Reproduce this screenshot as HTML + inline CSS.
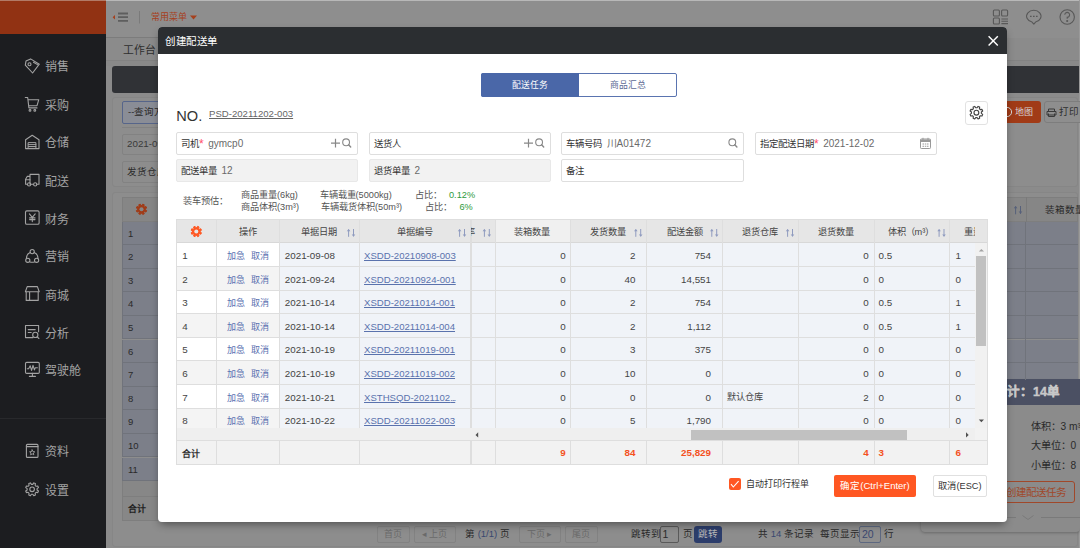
<!DOCTYPE html><html lang="zh-CN"><head><meta charset="utf-8"><style>
*{box-sizing:border-box;margin:0;padding:0}
html,body{width:1080px;height:548px;overflow:hidden;background:#8b8b8b;font-family:"Liberation Sans",sans-serif;color:#333}
div,span{position:absolute;white-space:nowrap}
svg{position:absolute;left:0;top:0;overflow:visible}
.mi{left:45px;color:#a3a3a3;font-size:12px;line-height:16px}
.inp{height:23px;border:1px solid #dedede;border-radius:2px;background:#fff;font-size:9.4px;line-height:22px;color:#333;padding-left:4px}
.inp.g{background:#f2f2f2;border-color:#e8e8e8}
.v{position:static;color:#6a6a6a;margin-left:4.5px;font-size:10px}
.req{position:static;color:#ff4d6a;font-size:12px;vertical-align:-1px}
.c{font-size:9.8px;line-height:23px;color:#444}
.hd{font-size:9.2px;line-height:26px;color:#444}
.bt{font-size:9.5px;line-height:14px;color:#2a2a2a}
</style></head><body>
<div style="left:0;top:0;width:106px;height:548px;background:#1c1d20"></div>
<div style="left:0;top:0;width:106px;height:34px;background:#913213;border-top:1px solid #b27a66"></div>
<div class="mi" style="top:59.1px">销售</div>
<div class="mi" style="top:98.3px">采购</div>
<div class="mi" style="top:135.2px">仓储</div>
<div class="mi" style="top:173.5px">配送</div>
<div class="mi" style="top:211.8px">财务</div>
<div class="mi" style="top:249.3px">营销</div>
<div class="mi" style="top:287.8px">商城</div>
<div class="mi" style="top:325.5px">分析</div>
<div class="mi" style="top:363.1px">驾驶舱</div>
<div class="mi" style="top:444.3px">资料</div>
<div class="mi" style="top:483.0px">设置</div>
<div style="left:0;top:418px;width:106px;height:1px;background:#28292c"></div>
<div style="left:106px;top:0;width:974px;height:38px;background:#8e8e8e;border-top:1px solid #b8b8b8"></div>
<div style="left:106px;top:37px;width:300px;height:1px;background:#7c7c7c"></div>
<div style="left:151px;top:11px;font-size:9px;line-height:12px;color:#a6401d">常用菜单</div>
<div style="left:122.5px;top:42.5px;font-size:10.8px;line-height:14px;color:#2e2e2e">工作台</div>
<div style="left:106px;top:60px;width:974px;height:6px;background:#898989;border-top:1px solid #828282"></div>
<div style="left:1078.5px;top:0;width:1.5px;height:548px;background:#9a9a9a"></div>
<div style="left:112px;top:66px;width:966.5px;height:27px;background:#303236;border-radius:3px 0 0 3px"></div>
<div style="left:112px;top:97px;width:966px;height:90px;background:#8d8d8d;border-radius:3px;border:1px solid #868686"></div>
<div style="left:122px;top:101px;width:60px;height:23px;border:1px solid #56658a;border-radius:2px;background:#8a8d96"></div>
<div class="bt" style="left:128px;top:104.5px">--查询方式</div>
<div style="left:122px;top:127px;width:60px;height:1px;background:#828282"></div>
<div style="left:122px;top:133.5px;width:60px;height:21.5px;border:1px solid #828282;border-radius:2px;background:#8d8d8d"></div>
<div class="bt" style="left:127px;top:137px;color:#3a3a3a;font-size:9.8px">2021-09-01</div>
<div style="left:122px;top:160.5px;width:60px;height:22px;border:1px solid #828282;border-radius:2px;background:#8d8d8d"></div>
<div class="bt" style="left:127px;top:164.5px">发货仓库</div>
<div style="left:990px;top:101px;width:50.5px;height:22px;background:#a13b17;border-radius:3px"></div>
<div style="left:1014.5px;top:105.5px;font-size:9px;line-height:12px;color:#d6d6d6">地图</div>
<div style="left:1043.5px;top:101px;width:50px;height:22px;border:1px solid #7d7d7d;border-radius:3px;background:#8e8e8e"></div>
<div style="left:1059.3px;top:105.5px;font-size:9.5px;line-height:12px;color:#2e2e2e">打印</div>
<div style="left:112px;top:192px;width:966px;height:354.5px;background:#8d8d8d;border-radius:3px;border:1px solid #868686"></div>
<div style="left:122px;top:197px;width:956px;height:24.5px;background:#868686;border:1px solid #7e7e7e"></div>
<div style="left:122px;top:221.5px;width:956px;height:23.6px;background:#7c7f89;border-left:1px solid #70737b;border-bottom:1px solid #70737b"></div>
<div class="bt" style="left:128px;top:226.5px">1</div>
<div style="left:122px;top:245.1px;width:956px;height:23.6px;background:#7c7f89;border-left:1px solid #70737b;border-bottom:1px solid #70737b"></div>
<div class="bt" style="left:128px;top:250.1px">2</div>
<div style="left:122px;top:268.7px;width:956px;height:23.6px;background:#7c7f89;border-left:1px solid #70737b;border-bottom:1px solid #70737b"></div>
<div class="bt" style="left:128px;top:273.7px">3</div>
<div style="left:122px;top:292.3px;width:956px;height:23.6px;background:#7c7f89;border-left:1px solid #70737b;border-bottom:1px solid #70737b"></div>
<div class="bt" style="left:128px;top:297.3px">4</div>
<div style="left:122px;top:315.9px;width:956px;height:23.6px;background:#7c7f89;border-left:1px solid #70737b;border-bottom:1px solid #70737b"></div>
<div class="bt" style="left:128px;top:320.9px">5</div>
<div style="left:122px;top:339.5px;width:956px;height:23.6px;background:#7c7f89;border-left:1px solid #70737b;border-bottom:1px solid #70737b"></div>
<div class="bt" style="left:128px;top:344.5px">6</div>
<div style="left:122px;top:363.1px;width:956px;height:23.6px;background:#7c7f89;border-left:1px solid #70737b;border-bottom:1px solid #70737b"></div>
<div class="bt" style="left:128px;top:368.1px">7</div>
<div style="left:122px;top:386.7px;width:956px;height:23.6px;background:#7c7f89;border-left:1px solid #70737b;border-bottom:1px solid #70737b"></div>
<div class="bt" style="left:128px;top:391.7px">8</div>
<div style="left:122px;top:410.3px;width:956px;height:23.6px;background:#7c7f89;border-left:1px solid #70737b;border-bottom:1px solid #70737b"></div>
<div class="bt" style="left:128px;top:415.3px">9</div>
<div style="left:122px;top:433.9px;width:956px;height:23.6px;background:#7c7f89;border-left:1px solid #70737b;border-bottom:1px solid #70737b"></div>
<div class="bt" style="left:128px;top:438.9px">10</div>
<div style="left:122px;top:457.5px;width:956px;height:23.6px;background:#7c7f89;border-left:1px solid #70737b;border-bottom:1px solid #70737b"></div>
<div class="bt" style="left:128px;top:462.5px">11</div>
<div style="left:122px;top:481px;width:956px;height:15px;background:#878787;border-left:1px solid #7e7e7e"></div>
<div style="left:122px;top:496px;width:956px;height:24.5px;background:#878787;border:1px solid #7e7e7e"></div>
<div class="bt" style="left:127.5px;top:501.5px;color:#222;font-weight:bold;font-size:9px">合计</div>
<div style="left:1025.5px;top:197px;width:1px;height:24.5px;background:#7a7a7a"></div>
<div class="bt" style="left:1045px;top:202.5px">装箱数量</div>
<svg width="1080" height="548"><path d="M1015.6 206.5V214.3M1020.5 206V213.8" stroke="#56607a" stroke-width="1"/><path d="M1013.8 208.2L1015.6 206L1017.4 208.2Z M1018.7 211.6L1020.5 213.8L1022.3 211.6Z" fill="#56607a"/></svg>
<div style="left:921px;top:379.5px;width:159px;height:152.5px;background:#8b8b8b;border-radius:4px;box-shadow:0 1px 3px rgba(0,0,0,0.25)"></div>
<div style="left:921px;top:379px;width:159px;height:25.5px;background:#4b5063;border-radius:4px 0 0 0"></div>
<div style="left:994px;top:383.5px;font-size:12.5px;line-height:16px;color:#c8c8c8;font-weight:bold;-webkit-text-stroke:0.4px #c8c8c8">合计：14单</div>
<div style="left:1030.5px;top:419.5px;font-size:10.2px;line-height:14px;color:#2a2a2a">体积：3 m³</div>
<div style="left:1030.5px;top:439.1px;font-size:10.2px;line-height:14px;color:#2a2a2a">大单位：0</div>
<div style="left:1030.5px;top:458.7px;font-size:10.2px;line-height:14px;color:#2a2a2a">小单位：8</div>
<div style="left:990px;top:480.5px;width:84.5px;height:22px;border:1px solid #a0482a;border-radius:3px"></div>
<div style="left:1006px;top:484.5px;font-size:10.5px;line-height:14px;color:#a0482a">创建配送任务</div>
<div style="left:921px;top:517px;width:95px;height:1px;background:#7a7a7a"></div>
<div style="left:1041px;top:517px;width:39px;height:1px;background:#7a7a7a"></div>
<svg width="1080" height="548" fill="none" stroke="#7a7a7a" stroke-width="1"><path d="M1022.5 515.5L1028 519.5L1033.5 515.5"/></svg>
<div style="left:1025px;top:221.5px;width:1px;height:158px;background:#70737b"></div>
<svg width="1080" height="548" fill="none" stroke="#d6d6d6" stroke-width="1"><circle cx="1007" cy="112" r="4.6"/></svg>
<svg width="1080" height="548" fill="none" stroke="#3a3a3a" stroke-width="1"><path d="M1048.5 111.5V109H1054.5V111.5M1047 111.5H1056V115H1047Z M1048.5 113.5V116.5H1054.5V113.5"/></svg>
<div style="left:377px;top:526px;width:32.5px;height:16.5px;border:1px solid #828282;border-radius:2px;font-size:9px;line-height:14.5px;text-align:center;color:#6a6a6a">首页</div>
<div style="left:413.5px;top:526px;width:42px;height:16.5px;border:1px solid #828282;border-radius:2px;font-size:9px;line-height:14.5px;text-align:center;color:#6a6a6a">◂ 上页</div>
<div style="left:518.5px;top:526px;width:42px;height:16.5px;border:1px solid #828282;border-radius:2px;font-size:9px;line-height:14.5px;text-align:center;color:#6a6a6a">下页 ▸</div>
<div style="left:564.5px;top:526px;width:33.5px;height:16.5px;border:1px solid #828282;border-radius:2px;font-size:9px;line-height:14.5px;text-align:center;color:#6a6a6a">尾页</div>
<div class="bt" style="left:465px;top:527px">第 <span style="position:static;color:#3a4870">(1/1)</span> 页</div>
<div class="bt" style="left:630.5px;top:527px">跳转到</div>
<div style="left:659.5px;top:525.5px;width:19px;height:17px;border:1px solid #5a5a5a;border-radius:2px;background:#8e8e8e;font-size:10.5px;line-height:15px;padding-left:2px;color:#2a2a2a">1</div>
<div class="bt" style="left:683px;top:527px">页</div>
<div style="left:694px;top:526px;width:28px;height:16.5px;background:#2c3d6b;border-radius:3px;font-size:9.5px;line-height:16px;text-align:center;color:#b8b8b8">跳转</div>
<div class="bt" style="left:758px;top:527px">共 <span style="position:static;color:#3a4870">14</span> 条记录</div>
<div class="bt" style="left:820px;top:527px">每页显示</div>
<div style="left:859px;top:525.5px;width:21.5px;height:17px;border:1px solid #5d6880;border-radius:2px;background:#8e8e8e;font-size:10.5px;line-height:15px;padding-left:2px;color:#3a4870">20</div>
<div class="bt" style="left:883.5px;top:527px">行</div>
<svg width="1080" height="548" fill="none" stroke="#a3a3a3" stroke-width="1.1" stroke-linejoin="round" stroke-linecap="round">
<path d="M25.3 65.1L26 61.1L30.6 58.9L39.3 64.2L32.6 73Z"/><circle cx="29.5" cy="64.2" r="1.5"/><path d="M33.5 62.2L37.5 64.6"/>
<path d="M25.3 97.5H27.7L28.9 107.9H37M28.3 99.7H38.8L37 105.7H28.7"/><circle cx="30" cy="110.4" r="0.9"/><circle cx="34.8" cy="110.4" r="0.9"/>
<path d="M25.6 148.6V139.8L32.2 135.3L39 139.8V148.6Z"/><path d="M28.5 142.6H35.9V148.4H28.5Z M28.5 144.6H35.9M28.5 146.5H35.9" stroke-width="1"/>
<path d="M30 184.2V174.4H39V184.2H37M33.2 184.2H31.2M27 184.2H25.6V179.2L27.2 176.4H30" /><circle cx="29.1" cy="184.4" r="1.6"/><circle cx="35.2" cy="184.4" r="1.6"/><path d="M25.6 179.8H30"/>
<rect x="25.5" y="210.9" width="13.6" height="13.4" rx="1.3"/><path d="M29.4 213.8L32.3 217.3L35.2 213.8M32.3 217.3V221.6M29.6 217.9H35M29.6 219.6H35"/>
<circle cx="32.2" cy="251.6" r="2.1"/><circle cx="27.8" cy="260.3" r="2.1"/><circle cx="36.6" cy="260.3" r="2.1"/><path d="M30.2 252.6A6.3 6.3 0 0 0 26.4 258.4M34.2 252.6A6.3 6.3 0 0 1 38 258.4M30 261.9A6.3 6.3 0 0 0 34.4 261.9"/>
<path d="M27.2 286.6H37.4L39.2 291.7H25.4Z M26.2 291.7V300.4H38.2V291.7M29.6 291.7V300.4"/>
<path d="M33 337.6H25.5V325.5H38.6V331.8M28.2 329.6H35.2M28.2 332.5H31.2"/><circle cx="35.3" cy="334.9" r="2.6"/><path d="M37.2 336.8L38.9 338.5"/>
<rect x="25.5" y="362.4" width="13.8" height="11" rx="1.2"/><path d="M27.3 368.7H28.6L30.2 365.8L31.6 370.4L33 365.3L34.4 369.9L35.3 367.8H37.4M32.4 373.4V376M29.4 376.4H35.4"/>
<rect x="26.4" y="444.4" width="11.6" height="13" rx="1"/><path d="M26.4 446.6H38" /><path d="M32.2 449.9L33 451.6L34.8 451.8L33.4 453L33.8 454.8L32.2 453.9L30.6 454.8L31 453L29.6 451.8L31.4 451.6Z" stroke-width="0.9"/>
</svg>
<svg width="1080" height="548"><path d="M145.35 209.91 L146.65 210.54 L146.02 212.07 L144.66 211.59 L143.79 212.46 L144.27 213.82 L142.74 214.45 L142.11 213.15 L140.89 213.15 L140.26 214.45 L138.73 213.82 L139.21 212.46 L138.34 211.59 L136.98 212.07 L136.35 210.54 L137.65 209.91 L137.65 208.69 L136.35 208.06 L136.98 206.53 L138.34 207.01 L139.21 206.14 L138.73 204.78 L140.26 204.15 L140.89 205.45 L142.11 205.45 L142.74 204.15 L144.27 204.78 L143.79 206.14 L144.66 207.01 L146.02 206.53 L146.65 208.06 L145.35 208.69Z" fill="#a13b17" stroke="#a13b17" stroke-width="1" stroke-linejoin="round"/><circle cx="141.5" cy="209.3" r="2" fill="#868686"/></svg>
<svg width="1080" height="548" fill="none" stroke="#a3a3a3" stroke-width="1.1" stroke-linejoin="round"><path d="M37.06 489.97 L38.48 490.99 L37.81 492.61 L36.07 492.33 L35.13 493.27 L35.41 495.01 L33.79 495.68 L32.77 494.26 L31.43 494.26 L30.41 495.68 L28.79 495.01 L29.07 493.27 L28.13 492.33 L26.39 492.61 L25.72 490.99 L27.14 489.97 L27.14 488.63 L25.72 487.61 L26.39 485.99 L28.13 486.27 L29.07 485.33 L28.79 483.59 L30.41 482.92 L31.43 484.34 L32.77 484.34 L33.79 482.92 L35.41 483.59 L35.13 485.33 L36.07 486.27 L37.81 485.99 L38.48 487.61 L37.06 488.63Z"/><circle cx="32.1" cy="489.3" r="2.3"/></svg>
<svg width="1080" height="548" fill="none" stroke="#585858" stroke-width="1.1">
<path d="M118 13.5H128M118 17.2H128M118 20.9H128" stroke-width="1.8" stroke="#5e5e5e"/><path d="M115 15V19.5L112.6 17.2Z" fill="#a6401d" stroke="none"/>
<path d="M139.5 11V23.5" stroke="#7a7a7a" stroke-width="1"/>
<path d="M190 15.6H197L193.5 19.6Z" fill="#a6401d" stroke="none"/>
<rect x="993.4" y="10" width="6" height="6" rx="1"/><rect x="1001.6" y="10" width="6" height="6" rx="1"/><rect x="993.4" y="18" width="6" height="6" rx="1"/><path d="M1001.4 19H1008M1001.4 21.3H1008M1001.4 23.6H1008"/>
<path d="M1032 22.05A7.2 6 0 1 1 1035.6 22.05L1033.8 24.2Z" stroke-linejoin="round"/><path d="M1030 16.3H1031.6M1033 16.3H1034.6M1036 16.3H1037.6" stroke-width="1.2"/>
<circle cx="1067.2" cy="17" r="7.2"/><path d="M1064.8 14.8A2.4 2.4 0 1 1 1067.2 17.2V18.8"/><circle cx="1067.2" cy="21" r="0.5" fill="#585858"/>
</svg>
<div style="left:158px;top:27px;width:848.8px;height:494.5px;background:#fff;border-radius:4px;overflow:hidden;box-shadow:0 4px 8px -2px rgba(0,0,0,0.45)">
<div style="left:0;top:0;width:849px;height:27px;background:#2b2e31"></div>
<div style="left:7px;top:7px;font-size:10.5px;letter-spacing:0.55px;line-height:14px;color:#fff">创建配送单</div>
</div>
<svg width="1080" height="548"><path d="M988.6 36.2L997.8 45.6M997.8 36.2L988.6 45.6" stroke="#fff" stroke-width="1.45"/></svg>
<div style="left:481px;top:73px;width:195.5px;height:24px;border:1px solid #5a74b0;border-radius:2px;background:#fff"></div>
<div style="left:481px;top:73px;width:98px;height:24px;background:#4a67a8;border-radius:2px 0 0 2px"></div>
<div style="left:481px;top:73px;width:98px;height:24px;font-size:8.8px;line-height:24.5px;color:#fff;text-align:center">配送任务</div>
<div style="left:579px;top:73px;width:97px;height:24px;font-size:8.8px;line-height:24.5px;color:#5d6a94;text-align:center">商品汇总</div>
<div style="left:176.3px;top:106.8px;font-size:14.6px;line-height:18px;color:#333">NO.</div>
<div style="left:209px;top:107.5px;font-size:9.6px;line-height:12px;color:#666;text-decoration:underline">PSD-20211202-003</div>
<div style="left:965px;top:101px;width:23px;height:23.5px;border:1px solid #e2e2e2;border-radius:3px;background:#fff"></div>
<div class="inp" style="left:176px;top:132px;width:182px">司机<span class="req">*</span><span class="v">gymcp0</span></div>
<div class="inp" style="left:369px;top:132px;width:181.5px">送货人</div>
<div class="inp" style="left:561px;top:132px;width:182.5px">车辆号码<span class="v">川A01472</span></div>
<div class="inp" style="left:755px;top:132px;width:182px">指定配送日期<span class="req">*</span><span class="v">2021-12-02</span></div>
<div class="inp g" style="left:176px;top:159px;width:182px">配送单量<span class="v">12</span></div>
<div class="inp g" style="left:369px;top:159px;width:181.5px">退货单量<span class="v">2</span></div>
<div class="inp" style="left:561px;top:159px;width:182.5px">备注</div>
<div style="left:183px;top:195px;font-size:9.2px;line-height:12px;color:#555">装车预估：</div>
<div style="left:241px;top:189px;font-size:9.2px;line-height:12px;color:#555">商品重量(6kg)</div>
<div style="left:241px;top:201px;font-size:9.2px;line-height:12px;color:#555">商品体积(3m³)</div>
<div style="left:319.5px;top:189px;font-size:9.2px;line-height:12px;color:#555">车辆载重(5000kg)</div>
<div style="left:321px;top:201px;font-size:9.2px;line-height:12px;color:#555">车辆载货体积(50m³)</div>
<div style="left:415px;top:189px;font-size:9.2px;line-height:12px;color:#555">占比：</div>
<div style="left:425px;top:201px;font-size:9.2px;line-height:12px;color:#555">占比：</div>
<div style="left:449px;top:189px;font-size:9.2px;line-height:12px;color:#555;color:#2e9a3c">0.12%</div>
<div style="left:459.5px;top:201px;font-size:9.2px;line-height:12px;color:#555;color:#2e9a3c">6%</div>
<div style="left:176px;top:218.5px;width:812.3px;height:246.8px;border:1px solid #dedede;background:#fff"></div>
<div style="left:177px;top:219.5px;width:810.3px;height:23.5px;background:#e6e6e6"></div>
<div style="left:495.7px;top:219.5px;width:75.00000000000006px;height:23.5px;background:#f0f0f0"></div>
<div style="left:279.4px;top:243px;width:695.6px;height:185px;background:#f0f3f8"></div>
<div style="left:177px;top:266.6px;width:102.4px;height:23.6px;background:#f4f4f4"></div>
<div style="left:177px;top:313.8px;width:102.4px;height:23.6px;background:#f4f4f4"></div>
<div style="left:177px;top:361.0px;width:102.4px;height:23.6px;background:#f4f4f4"></div>
<div style="left:177px;top:408.2px;width:102.4px;height:23.6px;background:#f4f4f4"></div>
<div style="left:177px;top:428px;width:810.3px;height:36.3px;background:#f2f2f2"></div>
<div style="left:177px;top:266.0px;width:798px;height:1px;background:#dedede"></div>
<div style="left:177px;top:289.6px;width:798px;height:1px;background:#dedede"></div>
<div style="left:177px;top:313.2px;width:798px;height:1px;background:#dedede"></div>
<div style="left:177px;top:336.8px;width:798px;height:1px;background:#dedede"></div>
<div style="left:177px;top:360.4px;width:798px;height:1px;background:#dedede"></div>
<div style="left:177px;top:384.0px;width:798px;height:1px;background:#dedede"></div>
<div style="left:177px;top:407.6px;width:798px;height:1px;background:#dedede"></div>
<div style="left:177px;top:242px;width:810.3px;height:1px;background:#d8d8d8"></div>
<div style="left:177px;top:440px;width:810.3px;height:1px;background:#dedede"></div>
<div style="left:216.1px;top:218.5px;width:1px;height:209.5px;background:#dedede"></div>
<div style="left:216.1px;top:441px;width:1px;height:24.30000000000001px;background:#dedede"></div>
<div style="left:278.9px;top:218.5px;width:1px;height:209.5px;background:#dedede"></div>
<div style="left:278.9px;top:441px;width:1px;height:24.30000000000001px;background:#dedede"></div>
<div style="left:359.1px;top:218.5px;width:1px;height:209.5px;background:#dedede"></div>
<div style="left:359.1px;top:441px;width:1px;height:24.30000000000001px;background:#dedede"></div>
<div style="left:470.0px;top:218.5px;width:1px;height:209.5px;background:#dedede"></div>
<div style="left:470.0px;top:441px;width:1px;height:24.30000000000001px;background:#dedede"></div>
<div style="left:495.2px;top:218.5px;width:1px;height:209.5px;background:#dedede"></div>
<div style="left:495.2px;top:441px;width:1px;height:24.30000000000001px;background:#dedede"></div>
<div style="left:570.2px;top:218.5px;width:1px;height:209.5px;background:#dedede"></div>
<div style="left:570.2px;top:441px;width:1px;height:24.30000000000001px;background:#dedede"></div>
<div style="left:645.9px;top:218.5px;width:1px;height:209.5px;background:#dedede"></div>
<div style="left:645.9px;top:441px;width:1px;height:24.30000000000001px;background:#dedede"></div>
<div style="left:721.8px;top:218.5px;width:1px;height:209.5px;background:#dedede"></div>
<div style="left:721.8px;top:441px;width:1px;height:24.30000000000001px;background:#dedede"></div>
<div style="left:798.1px;top:218.5px;width:1px;height:209.5px;background:#dedede"></div>
<div style="left:798.1px;top:441px;width:1px;height:24.30000000000001px;background:#dedede"></div>
<div style="left:873.9px;top:218.5px;width:1px;height:209.5px;background:#dedede"></div>
<div style="left:873.9px;top:441px;width:1px;height:24.30000000000001px;background:#dedede"></div>
<div style="left:948.9px;top:218.5px;width:1px;height:209.5px;background:#dedede"></div>
<div style="left:948.9px;top:441px;width:1px;height:24.30000000000001px;background:#dedede"></div>
<div style="left:471.3px;top:218.5px;width:1px;height:209.5px;background:#dedede"></div>
<div style="left:471.3px;top:441px;width:1px;height:24.30000000000001px;background:#dedede"></div>
<div class="hd" style="left:239px;top:218.5px">操作</div>
<div class="hd" style="left:301.4px;top:218.5px">单据日期</div>
<div class="hd" style="left:396.7px;top:218.5px">单据编号</div>
<div class="hd" style="left:514.4px;top:218.5px">装箱数量</div>
<div class="hd" style="left:590.4px;top:218.5px">发货数量</div>
<div class="hd" style="left:666.6px;top:218.5px">配送金额</div>
<div class="hd" style="left:741.7px;top:218.5px">退货仓库</div>
<div class="hd" style="left:818px;top:218.5px">退货数量</div>
<div class="hd" style="left:887.5px;top:218.5px">体积（m³）</div>
<div style="left:471px;top:218.5px;width:4.5px;height:25px;overflow:hidden"><div class="hd" style="left:-5px;top:0">率</div></div>
<div style="left:964px;top:218.5px;width:11px;height:25px;overflow:hidden"><div class="hd" style="left:0;top:0">重量</div></div>
<div style="left:177px;top:243px;width:798px;height:185px;overflow:hidden">
<div class="c" style="left:5.2px;top:0.9px;">1</div>
<div class="c" style="left:50.0px;top:0.9px;color:#5a70b0;font-size:9px;margin-top:1px">加急</div>
<div class="c" style="left:74.4px;top:0.9px;color:#5a70b0;font-size:9px;margin-top:1px">取消</div>
<div class="c" style="left:107.8px;top:0.9px;">2021-09-08</div>
<div class="c" style="left:187.0px;top:0.9px;color:#5a72ad;text-decoration:underline;font-size:9.6px">XSDD-20210908-003</div>
<div class="c" style="right:409.2px;top:0.9px">0</div>
<div class="c" style="right:339.5px;top:0.9px">2</div>
<div class="c" style="right:264.0px;top:0.9px">754</div>
<div class="c" style="right:106.4px;top:0.9px">0</div>
<div class="c" style="left:701.6px;top:0.9px;">0.5</div>
<div class="c" style="left:778.6px;top:0.9px;">1</div>
<div class="c" style="left:5.2px;top:24.5px;">2</div>
<div class="c" style="left:50.0px;top:24.5px;color:#5a70b0;font-size:9px;margin-top:1px">加急</div>
<div class="c" style="left:74.4px;top:24.5px;color:#5a70b0;font-size:9px;margin-top:1px">取消</div>
<div class="c" style="left:107.8px;top:24.5px;">2021-09-24</div>
<div class="c" style="left:187.0px;top:24.5px;color:#5a72ad;text-decoration:underline;font-size:9.6px">XSDD-20210924-001</div>
<div class="c" style="right:409.2px;top:24.5px">0</div>
<div class="c" style="right:339.5px;top:24.5px">40</div>
<div class="c" style="right:264.0px;top:24.5px">14,551</div>
<div class="c" style="right:106.4px;top:24.5px">0</div>
<div class="c" style="left:701.6px;top:24.5px;">0</div>
<div class="c" style="left:778.6px;top:24.5px;">0</div>
<div class="c" style="left:5.2px;top:48.1px;">3</div>
<div class="c" style="left:50.0px;top:48.1px;color:#5a70b0;font-size:9px;margin-top:1px">加急</div>
<div class="c" style="left:74.4px;top:48.1px;color:#5a70b0;font-size:9px;margin-top:1px">取消</div>
<div class="c" style="left:107.8px;top:48.1px;">2021-10-14</div>
<div class="c" style="left:187.0px;top:48.1px;color:#5a72ad;text-decoration:underline;font-size:9.6px">XSDD-20211014-001</div>
<div class="c" style="right:409.2px;top:48.1px">0</div>
<div class="c" style="right:339.5px;top:48.1px">2</div>
<div class="c" style="right:264.0px;top:48.1px">754</div>
<div class="c" style="right:106.4px;top:48.1px">0</div>
<div class="c" style="left:701.6px;top:48.1px;">0.5</div>
<div class="c" style="left:778.6px;top:48.1px;">1</div>
<div class="c" style="left:5.2px;top:71.7px;">4</div>
<div class="c" style="left:50.0px;top:71.7px;color:#5a70b0;font-size:9px;margin-top:1px">加急</div>
<div class="c" style="left:74.4px;top:71.7px;color:#5a70b0;font-size:9px;margin-top:1px">取消</div>
<div class="c" style="left:107.8px;top:71.7px;">2021-10-14</div>
<div class="c" style="left:187.0px;top:71.7px;color:#5a72ad;text-decoration:underline;font-size:9.6px">XSDD-20211014-004</div>
<div class="c" style="right:409.2px;top:71.7px">0</div>
<div class="c" style="right:339.5px;top:71.7px">2</div>
<div class="c" style="right:264.0px;top:71.7px">1,112</div>
<div class="c" style="right:106.4px;top:71.7px">0</div>
<div class="c" style="left:701.6px;top:71.7px;">0.5</div>
<div class="c" style="left:778.6px;top:71.7px;">1</div>
<div class="c" style="left:5.2px;top:95.3px;">5</div>
<div class="c" style="left:50.0px;top:95.3px;color:#5a70b0;font-size:9px;margin-top:1px">加急</div>
<div class="c" style="left:74.4px;top:95.3px;color:#5a70b0;font-size:9px;margin-top:1px">取消</div>
<div class="c" style="left:107.8px;top:95.3px;">2021-10-19</div>
<div class="c" style="left:187.0px;top:95.3px;color:#5a72ad;text-decoration:underline;font-size:9.6px">XSDD-20211019-001</div>
<div class="c" style="right:409.2px;top:95.3px">0</div>
<div class="c" style="right:339.5px;top:95.3px">3</div>
<div class="c" style="right:264.0px;top:95.3px">375</div>
<div class="c" style="right:106.4px;top:95.3px">0</div>
<div class="c" style="left:701.6px;top:95.3px;">0</div>
<div class="c" style="left:778.6px;top:95.3px;">0</div>
<div class="c" style="left:5.2px;top:118.9px;">6</div>
<div class="c" style="left:50.0px;top:118.9px;color:#5a70b0;font-size:9px;margin-top:1px">加急</div>
<div class="c" style="left:74.4px;top:118.9px;color:#5a70b0;font-size:9px;margin-top:1px">取消</div>
<div class="c" style="left:107.8px;top:118.9px;">2021-10-19</div>
<div class="c" style="left:187.0px;top:118.9px;color:#5a72ad;text-decoration:underline;font-size:9.6px">XSDD-20211019-002</div>
<div class="c" style="right:409.2px;top:118.9px">0</div>
<div class="c" style="right:339.5px;top:118.9px">10</div>
<div class="c" style="right:264.0px;top:118.9px">0</div>
<div class="c" style="right:106.4px;top:118.9px">0</div>
<div class="c" style="left:701.6px;top:118.9px;">0</div>
<div class="c" style="left:778.6px;top:118.9px;">0</div>
<div class="c" style="left:5.2px;top:142.5px;">7</div>
<div class="c" style="left:50.0px;top:142.5px;color:#5a70b0;font-size:9px;margin-top:1px">加急</div>
<div class="c" style="left:74.4px;top:142.5px;color:#5a70b0;font-size:9px;margin-top:1px">取消</div>
<div class="c" style="left:107.8px;top:142.5px;">2021-10-21</div>
<div class="c" style="left:187.0px;top:142.5px;color:#5a72ad;text-decoration:underline;font-size:9.6px">XSTHSQD-2021102<span style="position:static;letter-spacing:-1px">...</span></div>
<div class="c" style="right:409.2px;top:142.5px">0</div>
<div class="c" style="right:339.5px;top:142.5px">0</div>
<div class="c" style="right:264.0px;top:142.5px">0</div>
<div class="c" style="left:550.0px;top:142.5px;font-size:9.2px">默认仓库</div>
<div class="c" style="right:106.4px;top:142.5px">2</div>
<div class="c" style="left:701.6px;top:142.5px;">0</div>
<div class="c" style="left:778.6px;top:142.5px;">0</div>
<div class="c" style="left:5.2px;top:166.1px;">8</div>
<div class="c" style="left:50.0px;top:166.1px;color:#5a70b0;font-size:9px;margin-top:1px">加急</div>
<div class="c" style="left:74.4px;top:166.1px;color:#5a70b0;font-size:9px;margin-top:1px">取消</div>
<div class="c" style="left:107.8px;top:166.1px;">2021-10-22</div>
<div class="c" style="left:187.0px;top:166.1px;color:#5a72ad;text-decoration:underline;font-size:9.6px">XSDD-20211022-003</div>
<div class="c" style="right:409.2px;top:166.1px">0</div>
<div class="c" style="right:339.5px;top:166.1px">5</div>
<div class="c" style="right:264.0px;top:166.1px">1,790</div>
<div class="c" style="right:106.4px;top:166.1px">0</div>
<div class="c" style="left:701.6px;top:166.1px;">0</div>
<div class="c" style="left:778.6px;top:166.1px;">0</div>
</div>
<div class="c" style="left:181.5px;top:443px;font-weight:bold;font-size:9px;color:#333">合计</div>
<div class="c" style="right:514.2px;top:441px;font-weight:bold;color:#f4511e">9</div>
<div class="c" style="right:444.5px;top:441px;font-weight:bold;color:#f4511e">84</div>
<div class="c" style="right:369.0px;top:441px;font-weight:bold;color:#f4511e">25,829</div>
<div class="c" style="right:211.4px;top:441px;font-weight:bold;color:#f4511e">4</div>
<div class="c" style="left:878.6px;top:441px;font-weight:bold;color:#f4511e">3</div>
<div class="c" style="left:955.6px;top:441px;font-weight:bold;color:#f4511e">6</div>
<div style="left:975px;top:243px;width:12.3px;height:185px;background:#f1f1f1"></div>
<div style="left:976.3px;top:256px;width:10px;height:89.5px;background:#c1c1c1"></div>
<div style="left:177px;top:428px;width:798px;height:12px;background:#efefef"></div>
<div style="left:691px;top:429.5px;width:216px;height:10px;background:#c1c1c1"></div>
<svg width="1080" height="548" fill="none"><path d="M348.6 229.5V236.8M353.5 229V236.3" stroke="#8f9bbf" stroke-width="1"/><path d="M346.8 231.2L348.6 229L350.4 231.2Z M351.7 234.6L353.5 236.8L355.3 234.6Z" fill="#8f9bbf"/><path d="M459.6 229.5V236.8M464.5 229V236.3" stroke="#8f9bbf" stroke-width="1"/><path d="M457.8 231.2L459.6 229L461.4 231.2Z M462.7 234.6L464.5 236.8L466.3 234.6Z" fill="#8f9bbf"/><path d="M484.40000000000003 229.5V236.8M489.3 229V236.3" stroke="#8f9bbf" stroke-width="1"/><path d="M482.6 231.2L484.40000000000003 229L486.2 231.2Z M487.5 234.6L489.3 236.8L491.1 234.6Z" fill="#8f9bbf"/><path d="M635.8000000000001 229.5V236.8M640.7 229V236.3" stroke="#8f9bbf" stroke-width="1"/><path d="M634.0 231.2L635.8000000000001 229L637.6 231.2Z M638.9000000000001 234.6L640.7 236.8L642.5 234.6Z" fill="#8f9bbf"/><path d="M711.8000000000001 229.5V236.8M716.7 229V236.3" stroke="#8f9bbf" stroke-width="1"/><path d="M710.0 231.2L711.8000000000001 229L713.6 231.2Z M714.9000000000001 234.6L716.7 236.8L718.5 234.6Z" fill="#8f9bbf"/><path d="M787.6 229.5V236.8M792.5 229V236.3" stroke="#8f9bbf" stroke-width="1"/><path d="M785.8 231.2L787.6 229L789.4 231.2Z M790.7 234.6L792.5 236.8L794.3 234.6Z" fill="#8f9bbf"/><path d="M939.1 229.5V236.8M944.0 229V236.3" stroke="#8f9bbf" stroke-width="1"/><path d="M937.3 231.2L939.1 229L940.9 231.2Z M942.2 234.6L944.0 236.8L945.8 234.6Z" fill="#8f9bbf"/>
<path d="M200.15 232.11 L201.45 232.74 L200.82 234.27 L199.46 233.79 L198.59 234.66 L199.07 236.02 L197.54 236.65 L196.91 235.35 L195.69 235.35 L195.06 236.65 L193.53 236.02 L194.01 234.66 L193.14 233.79 L191.78 234.27 L191.15 232.74 L192.45 232.11 L192.45 230.89 L191.15 230.26 L191.78 228.73 L193.14 229.21 L194.01 228.34 L193.53 226.98 L195.06 226.35 L195.69 227.65 L196.91 227.65 L197.54 226.35 L199.07 226.98 L198.59 228.34 L199.46 229.21 L200.82 228.73 L201.45 230.26 L200.15 230.89Z" fill="#ff5722" stroke="#ff5722" stroke-width="1" stroke-linejoin="round"/><circle cx="196.3" cy="231.5" r="2" fill="#e6e6e6"/>
<path d="M331 143.2H340M335.5 138.8V147.6" stroke="#888" stroke-width="1.2"/><circle cx="346.1" cy="142.3" r="3.4" stroke="#888" stroke-width="1.1"/><path d="M348.6 144.8L350.7 147" stroke="#888" stroke-width="1.4" stroke-linecap="round"/>
<path d="M524 143.2H533M528.5 138.8V147.6" stroke="#888" stroke-width="1.2"/><circle cx="539.1" cy="142.3" r="3.4" stroke="#888" stroke-width="1.1"/><path d="M541.6 144.8L543.7 147" stroke="#888" stroke-width="1.4" stroke-linecap="round"/>
<circle cx="732.3" cy="142.3" r="3.4" stroke="#888" stroke-width="1.1"/><path d="M734.8 144.8L736.9 147" stroke="#888" stroke-width="1.4" stroke-linecap="round"/>
<rect x="920.5" y="139" width="10" height="9.5" rx="0.8" stroke="#999" stroke-width="1"/><path d="M920.5 139.5H930.5V142H920.5Z" fill="#999"/><path d="M923 137.8V140M928 137.8V140" stroke="#999" stroke-width="1"/><path d="M922.5 144H924M924.8 144H926.3M927 144H928.5M922.5 146.2H924M924.8 146.2H926.3M927 146.2H928.5" stroke="#999" stroke-width="1.1"/>
<path d="M981.36 113.37 L982.68 114.37 L982.02 115.96 L980.37 115.73 L979.43 116.67 L979.66 118.32 L978.07 118.98 L977.07 117.66 L975.73 117.66 L974.73 118.98 L973.14 118.32 L973.37 116.67 L972.43 115.73 L970.78 115.96 L970.12 114.37 L971.44 113.37 L971.44 112.03 L970.12 111.03 L970.78 109.44 L972.43 109.67 L973.37 108.73 L973.14 107.08 L974.73 106.42 L975.73 107.74 L977.07 107.74 L978.07 106.42 L979.66 107.08 L979.43 108.73 L980.37 109.67 L982.02 109.44 L982.68 111.03 L981.36 112.03Z" stroke="#444" stroke-width="1.15" stroke-linejoin="round"/><circle cx="976.4" cy="112.7" r="2.4" stroke="#444" stroke-width="1.15"/>
<path d="M978.8 251.6H984L981.4 248.9Z" fill="#a3a3a3"/><path d="M978.8 419.5H984L981.4 422.2Z" fill="#505050"/>
<path d="M478.2 432.3V437.5L475.5 434.9Z" fill="#505050"/><path d="M966 432.3V437.5L968.7 434.9Z" fill="#505050"/>
<path d="M731 484.2L733.3 487L738.6 481.2" stroke="#fff" stroke-width="1.1"/>
</svg>
<div style="left:729px;top:478px;width:12px;height:12px;background:#ff5722;border-radius:2px;z-index:-0"></div>
<div style="left:745.5px;top:477.5px;font-size:9px;line-height:12px;color:#333">自动打印行程单</div>
<div style="left:834px;top:474.5px;width:82px;height:22px;background:#ff5722;border-radius:2px;color:#fff;font-size:9.5px;line-height:22px;text-align:center">确定(Ctrl+Enter)</div>
<div style="left:933px;top:474.5px;width:54px;height:22px;background:#fff;border:1px solid #e0e0e0;border-radius:2px;color:#333;font-size:9.2px;line-height:20px;text-align:center">取消(ESC)</div>
<svg width="1080" height="548" fill="none"><path d="M731 484.2L733.3 487L738.6 481.2" stroke="#fff" stroke-width="1.1"/></svg>
</body></html>
